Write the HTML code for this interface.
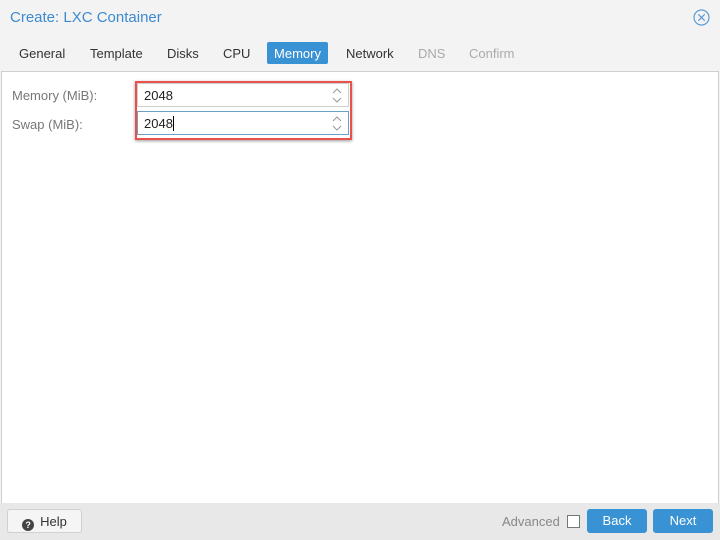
<!DOCTYPE html><html><head><style>
body{margin:0;width:720px;height:540px;background:#f3f3f3;font-family:"Liberation Sans",sans-serif;position:relative;overflow:hidden;font-size:13px;color:#333}
.a{position:absolute}
.tab{position:absolute;top:42px;height:22px;line-height:23px;font-size:13px;color:#333}
.inp{position:absolute;left:137px;width:212px;height:24px;background:#fff;border:1px solid #cfcfcf;box-sizing:border-box;line-height:23px;padding-left:6px;font-size:13px;color:#222}
.spin{position:absolute;right:6px;top:3px}
.btn{position:absolute;top:509px;height:24px;line-height:24px;text-align:center;border-radius:3px;font-size:13px}
</style></head><body>
<div class="a" style="left:10px;top:9px;font-size:15px;color:#3d8ad0">Create: LXC Container</div>
<svg class="a" style="left:693px;top:9px" width="17" height="17" viewBox="0 0 17 17"><circle cx="8.5" cy="8.5" r="7.5" fill="none" stroke="#5b9bd5" stroke-width="1.2"/><path d="M5.3 5.3L11.7 11.7M11.7 5.3L5.3 11.7" stroke="#5b9bd5" stroke-width="1.2"/></svg>
<div class="tab" style="left:19px">General</div>
<div class="tab" style="left:90px">Template</div>
<div class="tab" style="left:167px">Disks</div>
<div class="tab" style="left:223px">CPU</div>
<div class="tab" style="left:267px;width:61px;background:#3892d4;color:#fff;text-align:center;border-radius:2px">Memory</div>
<div class="tab" style="left:346px">Network</div>
<div class="tab" style="left:418px;color:#aaa">DNS</div>
<div class="tab" style="left:469px;color:#aaa">Confirm</div>
<div class="a" style="left:1px;top:71px;width:716px;height:431px;background:#fff;border:1px solid #cfcfcf"></div>
<div class="a" style="left:12px;top:88px;color:#777">Memory (MiB):</div>
<div class="a" style="left:12px;top:117px;color:#777">Swap (MiB):</div>
<div class="a" style="left:135px;top:81px;width:213px;height:55px;border:2px solid #e8524a;box-shadow:0 1px 3px rgba(0,0,0,.4)"></div>
<div class="inp" style="top:83px">2048<svg class="spin" width="10" height="17" viewBox="0 0 10 17"><path d="M1 6L5 2L9 6M1 11L5 15L9 11" fill="none" stroke="#999" stroke-width="1"/></svg></div>
<div class="inp" style="top:111px;border-color:#6a9fc8">2048<span style="display:inline-block;width:1px;height:15px;background:#000;vertical-align:-3px"></span><svg class="spin" width="10" height="17" viewBox="0 0 10 17"><path d="M1 6L5 2L9 6M1 11L5 15L9 11" fill="none" stroke="#999" stroke-width="1"/></svg></div>
<div class="a" style="left:0;top:503px;width:720px;height:37px;background:#e8e8e8"></div>
<div class="btn" style="left:7px;width:75px;background:#f5f5f5;border:1px solid #d0d0d0;box-sizing:border-box;color:#333"><span style="display:inline-block;width:12px;height:12px;border-radius:6px;background:#444;color:#fff;font-size:9px;line-height:12px;font-weight:bold;vertical-align:-2px;margin-right:6px">?</span>Help</div>
<div class="a" style="left:502px;top:514px;color:#888">Advanced</div>
<div class="a" style="left:567px;top:515px;width:11px;height:11px;border:1px solid #777;background:#fff"></div>
<div class="btn" style="left:587px;width:60px;background:#3892d4;color:#fff">Back</div>
<div class="btn" style="left:653px;width:60px;background:#3892d4;color:#fff">Next</div>
</body></html>
